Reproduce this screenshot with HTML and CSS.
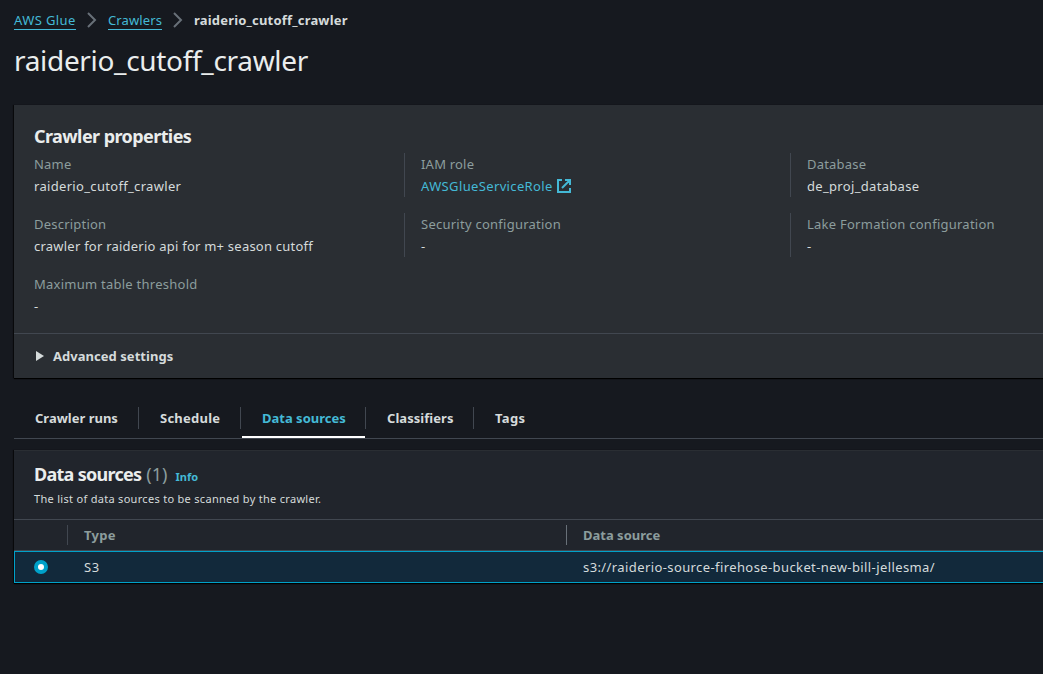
FILE: index.html
```html
<!DOCTYPE html>
<html lang="en">
<head>
<meta charset="utf-8">
<title>raiderio_cutoff_crawler - AWS Glue</title>
<link rel="stylesheet" href="styles.css">
</head>
<body>
<nav class="breadcrumbs">
  <a class="crumb crumb-service" href="#">AWS Glue</a>
  <svg class="chevron" viewBox="0 0 10 16"><path d="M1 1l7 7-7 7"/></svg>
  <a class="crumb crumb-list" href="#">Crawlers</a>
  <svg class="chevron" viewBox="0 0 10 16"><path d="M1 1l7 7-7 7"/></svg>
  <span class="crumb-current">raiderio_cutoff_crawler</span>
</nav>
<h1 class="page-title">raiderio_cutoff_crawler</h1>

<section class="panel properties">
  <h2 class="panel-title">Crawler properties</h2>
  <div class="property-grid">
    <div class="property"><div class="label">Name</div><div class="value t-crawler">raiderio_cutoff_crawler</div></div>
    <div class="property divided"><div class="label">IAM role</div><div class="value"><a class="role-link" href="#"><span class="t-role">AWSGlueServiceRole</span><svg class="external" viewBox="0 0 14 14"><path d="M5 1H1v12h12V9M8 1h5v5M13 1L5 9"/></svg></a></div></div>
    <div class="property divided"><div class="label">Database</div><div class="value t-crawler">de_proj_database</div></div>
    <div class="property"><div class="label">Description</div><div class="value t-desctext">crawler for raiderio api for m+ season cutoff</div></div>
    <div class="property divided"><div class="label t-wide">Security configuration</div><div class="value">-</div></div>
    <div class="property divided"><div class="label t-wide">Lake Formation configuration</div><div class="value">-</div></div>
    <div class="property"><div class="label t-max">Maximum table threshold</div><div class="value">-</div></div>
  </div>
  <div class="advanced"><svg class="caret" viewBox="0 0 8 10"><path d="M0 0l8 5-8 5z"/></svg><span>Advanced settings</span></div>
</section>

<div class="tabs">
  <div class="tab tab-runs">Crawler runs</div>
  <div class="tab tab-schedule">Schedule</div>
  <div class="tab tab-sources active">Data sources</div>
  <div class="tab tab-classifiers">Classifiers</div>
  <div class="tab tab-tags">Tags</div>
</div>

<section class="panel sources">
  <header class="sources-header">
    <div class="heading"><h2 class="heading-title">Data sources</h2><span class="count">(1)</span><a class="info" href="#">Info</a></div>
    <p class="description">The list of data sources to be scanned by the crawler.</p>
  </header>
  <div class="row head">
    <div class="cell select"></div>
    <div class="cell type">Type</div>
    <div class="cell">Data source</div>
  </div>
  <div class="row selected">
    <div class="cell select"><i class="radio"></i></div>
    <div class="cell type">S3</div>
    <div class="cell uri">s3://raiderio-source-firehose-bucket-new-bill-jellesma/</div>
  </div>
</section>
</body>
</html>
```
FILE: styles.css
```css
* { box-sizing: border-box; }
body { margin: 0; width: 1043px; height: 674px; overflow: hidden; background: #16191f; color: #d5dbdb; font: 13px/22px "Noto Sans", sans-serif; }
a { color: #44b9d6; text-decoration: none; }
h1, h2, p { margin: 0; }
svg { display: block; flex: none; fill: none; }
.breadcrumbs { display: flex; align-items: center; height: 22px; margin: 9px 0 0 14px; white-space: nowrap; }
.crumb { border-bottom: 1px solid #44b9d6; padding-top: 1px; line-height: 18px; }
.crumb-service { width: 62px; letter-spacing: .4px; }
.crumb-list { width: 54px; letter-spacing: .13px; }
.chevron { width: 10px; height: 16px; margin: 0 11px; stroke: #687078; stroke-width: 2; }
.crumb-current { font-weight: 700; letter-spacing: .19px; }
.page-title { height: 36px; margin: 11px 0 0 14px; font-size: 28px; line-height: 36px; font-weight: 400; letter-spacing: -.32px; color: #eaeded; }
.panel { margin-left: 14px; box-shadow: 0 1px 1px #000, -1px 0 1px #0008; }
.properties { height: 273px; margin-top: 27px; background: #2a2e33; }
.panel-title { padding: 20px 20px 0; font-size: 18px; line-height: 22px; letter-spacing: -.58px; color: #eaeded; }
.property-grid { display: grid; grid-template-columns: 370px 386px 1fr; row-gap: 16px; align-content: start; padding: 6px 0 0 20px; height: 186px; }
.property { height: 44px; }
.divided { border-left: 1px solid #414750; padding-left: 16px; }
.label { color: #8c9d9d; letter-spacing: .21px; }
.t-wide { letter-spacing: .25px; }
.t-max { letter-spacing: .25px; }
.t-crawler { letter-spacing: .32px; }
.t-desctext { letter-spacing: .23px; }
.role-link { display: flex; align-items: center; letter-spacing: .36px; }
.external { width: 14px; height: 14px; margin-left: 4px; stroke: #44b9d6; stroke-width: 2; }
.advanced { display: flex; align-items: center; height: 45px; padding-left: 22px; border-top: 1px solid #414750; font-weight: 700; letter-spacing: .04px; }
.caret { width: 8px; height: 10px; margin-right: 9px; fill: #d5dbdb; }
.tabs { display: flex; height: 41px; margin: 20px 0 0 14px; border-bottom: 1px solid #414750; font-weight: 700; }
.tab { padding-left: 21px; line-height: 41px; background: linear-gradient(#414750, #414750) right 9px / 1px 22px no-repeat; }
.tab-runs { width: 125px; }
.tab-schedule { width: 102px; letter-spacing: .23px; }
.tab-sources { width: 125px; }
.tab-classifiers { width: 108px; letter-spacing: .05px; }
.tab-tags { background: none; letter-spacing: .35px; }
.active { color: #44b9d6; background: linear-gradient(#414750, #414750) right 9px / 1px 22px no-repeat, linear-gradient(#fff, #fff) 1px 100% / 123px 2px no-repeat; }
.sources { margin-top: 11px; background: #21252c; }
.sources-header { height: 69px; padding: 12px 20px 0; border-top: 1px solid #2a2e33; }
.heading { display: flex; align-items: baseline; height: 22px; }
.heading-title { font-size: 18px; line-height: 22px; letter-spacing: -.72px; color: #eaeded; }
.count { margin-left: 5px; font-size: 18px; color: #8c9d9d; }
.info { margin-left: 8px; font-size: 11px; font-weight: 700; }
.description { font-size: 11px; line-height: 18px; padding-top: 5px; letter-spacing: .3px; }
.row { display: flex; align-items: center; height: 32px; }
.head { border-top: 1px solid #414750; border-bottom: 1px solid #414750; color: #8c9d9d; font-weight: 700; background: linear-gradient(#414750, #414750) 53px 5px / 1px 20px no-repeat, linear-gradient(#687078, #687078) 552px 5px / 1px 20px no-repeat; }
.head .type { letter-spacing: .3px; }
.selected { background: #12293b; border: 1px solid #00a1c9; border-right: 0; }
.select { width: 70px; }
.selected .select { width: 69px; }
.selected .type { letter-spacing: .6px; }
.type { width: 499px; }
.uri { letter-spacing: .4px; }
.radio { display: block; width: 14px; height: 14px; border-radius: 50%; border: 4px solid #00a1c9; background: #fff; margin-left: 19px; }
```
